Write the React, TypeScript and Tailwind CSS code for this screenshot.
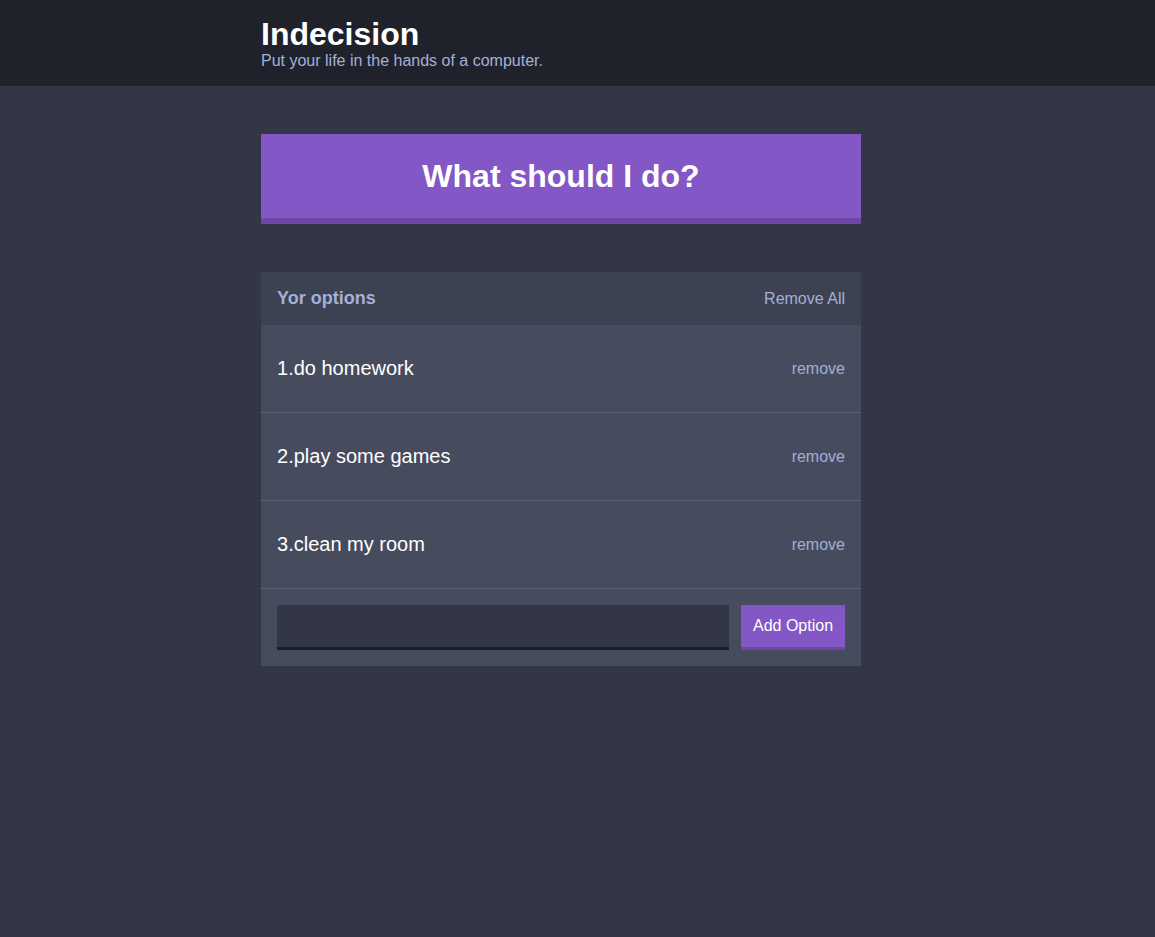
import React from "react";

const options = ["do homework", "play some games", "clean my room"];

export default function App() {
  return (
    <div
      className="min-h-[937px] bg-[#333745] text-white"
      style={{ fontFamily: '"Liberation Sans", Arial, Helvetica, sans-serif' }}
    >
      <header className="bg-[#20222b] py-4">
        <div className="ml-[261px] w-[600px]">
          <h1 className="m-0 text-[32px] font-bold leading-[36px] text-white">Indecision</h1>
          <h2 className="m-0 text-[16px] font-medium leading-[18px] text-[#a5afd7]">
            Put your life in the hands of a computer.
          </h2>
        </div>
      </header>
      <main className="ml-[261px] w-[600px] pt-12">
        <button className="block w-full h-[90px] bg-[#8357c5] border-b-[6px] border-[#6d47a6] text-[32px] font-bold text-white leading-[37px]">
          What should I do?
        </button>
        <div className="mt-12 bg-[#464b5e]">
          <div className="flex items-center justify-between bg-[#3c4251] px-4 h-[53px]">
            <h3 className="m-0 text-[18px] font-bold text-[#a5afd7]">Yor options</h3>
            <button className="text-[16px] text-[#a5afd7]">Remove All</button>
          </div>
          {options.map((o, i) => (
            <div
              key={o}
              className="flex items-center justify-between h-[88px] px-4 border-b border-[#5e6478]"
            >
              <p className="m-0 text-[20px] leading-[23px] text-white -mt-[1px]">
                {i + 1}.{o}
              </p>
              <button className="text-[16px] text-[#a5afd7]">remove</button>
            </div>
          ))}
          <form className="flex p-4 gap-3" onSubmit={(e) => e.preventDefault()}>
            <input
              className="flex-1 h-[45px] bg-[#333745] border-b-[3px] border-[#1c1e25] outline-none px-2 text-[#a5afd7]"
              type="text"
            />
            <button className="h-[45px] w-[104px] bg-[#8357c5] border-b-[3px] border-[#6d47a6] text-[16px] text-white">
              Add Option
            </button>
          </form>
        </div>
      </main>
    </div>
  );
}
